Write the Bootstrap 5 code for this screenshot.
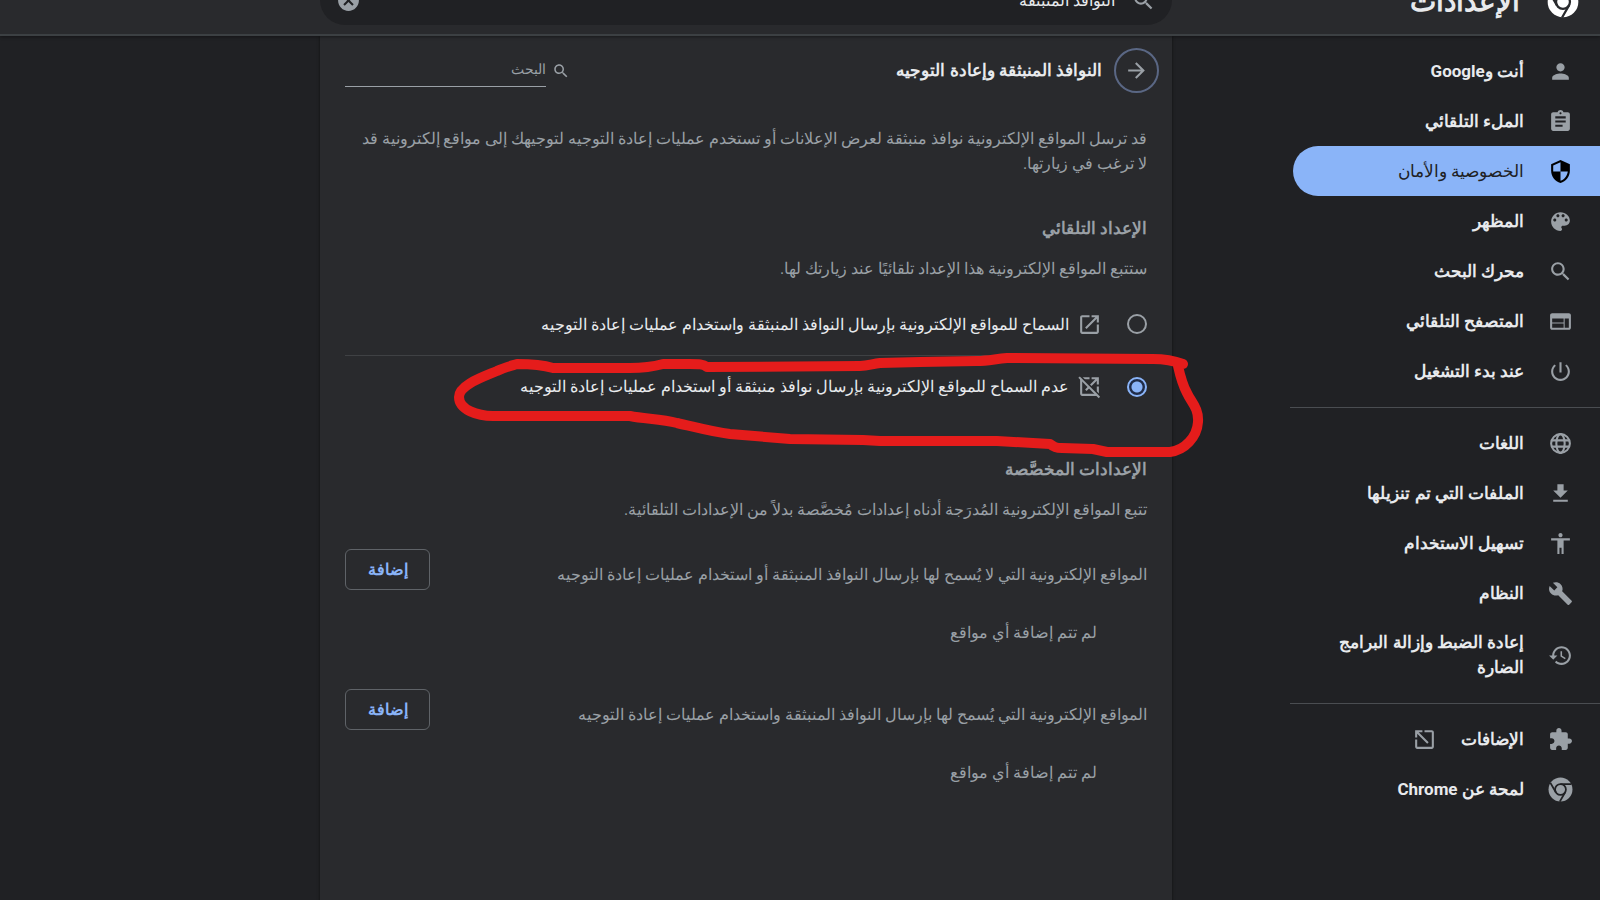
<!doctype html>
<html lang="ar" dir="rtl">
<head>
<meta charset="utf-8">
<meta name="viewport" content="width=device-width, initial-scale=1">
<title>الإعدادات</title>
<link href="https://cdn.jsdelivr.net/npm/bootstrap@5.3.0/dist/css/bootstrap.min.css" rel="stylesheet">
<style>
body{background:#202124;color:#e8eaed;font:16px/25px Roboto,"Segoe UI",sans-serif;height:100vh;overflow:hidden}
svg.ico{width:25px;height:25px;fill:#9aa0a6;flex:none;display:block}
/* The three columns shared by the toolbar and the page */
.cols{display:grid;grid-template-columns:minmax(310px,428fr) minmax(0,852px) minmax(0,320fr)}
.topbar{background:#292a2d;height:70px;margin-top:-34px;border-bottom:2px solid #3c4043;box-shadow:0 1px 3px #0006;position:relative;z-index:2;align-items:center}
.topbar h1{font-size:28px;font-weight:700;line-height:36px}
.brand{padding:4px 21px 0 0;gap:27px}
.brand svg{width:32px;height:32px;flex:none}
.pill{background:#202124;border-radius:25px;height:50px;padding:0 16px}
.pill input{color:#e8eaed;font-size:16px;outline:0}
.topbar button{line-height:0}
.side{width:310px;padding-top:10px}
.side a{color:#e8eaed;font-size:17px;font-weight:700;min-height:50px;padding:0 27px 0 24px;text-decoration:none}
.side a.on{background:#8ab4f8;color:#202124;font-weight:400;border-radius:25px 0 0 25px;margin-left:3px}
.side a.on svg{fill:#000}
.side a.tall{min-height:74px}
.side hr{margin:11px 0 10px;border-top:1px solid #4a4d51;opacity:1}
.panel{background:#292a2d;min-height:100vh;padding:0 25px;box-shadow:0 0 3px #0008}
.panel p{margin:0}
.head{height:69px}
.back{width:45px;height:45px;border:2px solid #5a6784;margin-right:-12px}
.head h2,.sub{font-size:17px;line-height:25px;font-weight:700;margin:0}
.find{gap:6px}
.find input{width:201px;height:32px;border:0;border-bottom:1px solid #9aa0a6;color:#e8eaed;font-size:14px;background:none;outline:0;padding:0 0 2px}
.find input::placeholder{color:#9aa0a6;opacity:1}
.find svg.ico{width:18px;height:18px}
.dim,.sub{color:#9aa0a6}
.panel .intro{padding:21px 0 0 10px}
.intro + .sub{margin-top:40px}
.panel .sub + .dim{margin-top:15px}
.opts{margin-top:12px}
.opt{height:62px}
.opt + .opt{border-top:1px solid #3f4144}
.opt input{appearance:none;width:20px;height:20px;border:2px solid #9aa0a6;border-radius:50%;margin:0}
.opt input:checked{border-color:#8ab4f8;background:radial-gradient(circle,#8ab4f8 5px,#202c48 6px)}
.opt svg.ico{margin:0 25px 0 8px}
.opts + .sub{margin-top:40px}
.sites{margin-top:27px}
.sites + .sites{margin-top:44px}
.panel .sites .lead-in{padding-top:13px}
.panel .sites .none{margin-top:30px;padding-right:50px}
.add{width:85px;height:41px;border:1px solid #5f6368;color:#8ab4f8;font-weight:700;line-height:25px;padding:0}
.mark-up{left:0;top:0;width:900px;height:500px;overflow:visible;pointer-events:none;z-index:1}
</style>
<script src="https://cdn.jsdelivr.net/npm/bootstrap@5.3.0/dist/js/bootstrap.bundle.min.js"></script>
</head>
<body>
<svg class="d-none">
<symbol id="search" viewBox="0 0 24 24"><path d="M15.500 14h-.79l-.28-.27C15.410 12.590 16 11.110 16 9.500 16 5.910 13.090 3 9.500 3S3 5.910 3 9.500 5.910 16 9.500 16c1.610 0 3.090-.59 4.230-1.570l.27.28v.79l5 4.990L20.490 19l-4.990-5zm-6 0C7.010 14 5 11.990 5 9.500S7.010 5 9.500 5 14 7.010 14 9.500 11.990 14 9.500 14z"/></symbol>
<symbol id="open" viewBox="0 0 24 24"><path d="M19 19H5V5h7V3H5c-1.110 0-2 .9-2 2v14c0 1.100.89 2 2 2h14c1.100 0 2-.9 2-2v-7h-2v7zM14 3v2h3.590l-9.830 9.830 1.410 1.410L19 6.410V10h2V3h-7z"/></symbol>
<symbol id="chrome" viewBox="0 0 24 24"><circle cx="12" cy="12" r="11.500"/><g fill="none" stroke="var(--cut)" stroke-width="1.700"><circle cx="12" cy="12" r="5.200"/><path d="M12 6.800H22.500M7.500 14.600 2.300 5.600M16.500 14.600 11.300 23.600"/></g></symbol>
</svg>

<header class="topbar cols">
  <div class="brand d-flex align-items-center">
    <svg fill="#fff" style="--cut:#292a2d"><use href="#chrome"/></svg>
    <h1 class="m-0">الإعدادات</h1>
  </div>
  <div class="pill d-flex align-items-center gap-3" role="search">
    <svg class="ico"><use href="#search"/></svg>
    <input class="flex-grow-1 bg-transparent border-0 p-0" type="text" value="النوافذ المنبثقة" aria-label="البحث في الإعدادات">
    <button class="btn p-0 border-0" aria-label="محو البحث"><svg class="ico" viewBox="0 0 24 24"><path d="M12 2C6.470 2 2 6.470 2 12s4.470 10 10 10 10-4.470 10-10S17.530 2 12 2zm5 13.590L15.590 17 12 13.410 8.410 17 7 15.590 10.590 12 7 8.410 8.410 7 12 10.590 15.590 7 17 8.410 13.410 12 17 15.590z"/></svg></button>
  </div>
</header>

<div class="cols">
<nav class="side" aria-label="أقسام الإعدادات">
  <a href="#" class="d-flex align-items-center gap-4"><svg class="ico" viewBox="0 0 24 24"><path d="M12 12c2.210 0 4-1.790 4-4s-1.790-4-4-4-4 1.790-4 4 1.790 4 4 4zm0 2c-2.670 0-8 1.340-8 4v2h16v-2c0-2.660-5.330-4-8-4z"/></svg><span>أنت وGoogle</span></a>
  <a href="#" class="d-flex align-items-center gap-4"><svg class="ico" viewBox="0 0 24 24"><path d="M19 3h-4.180C14.400 1.840 13.300 1 12 1c-1.300 0-2.400.84-2.820 2H5c-1.100 0-2 .9-2 2v14c0 1.100.9 2 2 2h14c1.100 0 2-.9 2-2V5c0-1.100-.9-2-2-2zm-7 0c.55 0 1 .45 1 1s-.45 1-1 1-1-.45-1-1 .45-1 1-1zm2 14H7v-2h7v2zm3-4H7v-2h10v2zm0-4H7V7h10v2z"/></svg><span>الملء التلقائي</span></a>
  <a href="#" class="on d-flex align-items-center gap-4" aria-current="page"><svg class="ico" viewBox="0 0 24 24"><path d="M12 1L3 5v6c0 5.550 3.840 10.740 9 12 5.160-1.260 9-6.450 9-12V5l-9-4zm0 10.990h7c-.53 4.120-3.280 7.790-7 8.940V12H5V6.300l7-3.110v8.800z"/></svg><span>الخصوصية والأمان</span></a>
  <a href="#" class="d-flex align-items-center gap-4"><svg class="ico" viewBox="0 0 24 24"><path d="M12 3c-4.970 0-9 4.030-9 9s4.030 9 9 9c.83 0 1.500-.67 1.500-1.500 0-.39-.15-.74-.39-1.010-.23-.26-.38-.61-.38-.99 0-.83.67-1.500 1.500-1.500H16c2.760 0 5-2.240 5-5 0-4.420-4.030-8-9-8zm-5.500 9c-.83 0-1.500-.67-1.500-1.500S5.670 9 6.500 9 8 9.670 8 10.500 7.330 12 6.500 12zm3-4C8.670 8 8 7.330 8 6.500S8.670 5 9.500 5s1.500.67 1.500 1.500S10.330 8 9.500 8zm5 0c-.83 0-1.500-.67-1.500-1.500S13.670 5 14.500 5s1.500.67 1.500 1.500S15.330 8 14.500 8zm3 4c-.83 0-1.500-.67-1.500-1.500S16.670 9 17.500 9s1.500.67 1.500 1.500-.67 1.500-1.500 1.500z"/></svg><span>المظهر</span></a>
  <a href="#" class="d-flex align-items-center gap-4"><svg class="ico"><use href="#search"/></svg><span>محرك البحث</span></a>
  <a href="#" class="d-flex align-items-center gap-4"><svg class="ico" viewBox="0 0 24 24"><path d="M20 4H4c-1.100 0-2 .9-2 2v12c0 1.100.9 2 2 2h16c1.100 0 2-.9 2-2V6c0-1.100-.9-2-2-2zm-5 14H4v-4h11v4zm0-5H4V9h11v4zm5 5h-4V9h4v9z"/></svg><span>المتصفح التلقائي</span></a>
  <a href="#" class="d-flex align-items-center gap-4"><svg class="ico" viewBox="0 0 24 24"><path d="M13 3h-2v10h2V3zm4.830 2.170l-1.420 1.420C17.990 7.860 19 9.810 19 12c0 3.870-3.130 7-7 7s-7-3.130-7-7c0-2.190 1.010-4.140 2.580-5.420L6.170 5.170C4.230 6.820 3 9.260 3 12c0 4.970 4.030 9 9 9s9-4.030 9-9c0-2.740-1.230-5.180-3.170-6.830z"/></svg><span>عند بدء التشغيل</span></a>
  <hr>
  <a href="#" class="d-flex align-items-center gap-4"><svg class="ico" viewBox="0 0 24 24"><g fill="none" stroke="#9aa0a6" stroke-width="2"><circle cx="12" cy="12" r="9"/><ellipse cx="12" cy="12" rx="4" ry="9"/><path d="M3.500 9h17M3.500 15h17"/></g></svg><span>اللغات</span></a>
  <a href="#" class="d-flex align-items-center gap-4"><svg class="ico" viewBox="0 0 24 24"><path d="M19 9h-4V3H9v6H5l7 7 7-7zM5 18v2h14v-2H5z"/></svg><span>الملفات التي تم تنزيلها</span></a>
  <a href="#" class="d-flex align-items-center gap-4"><svg class="ico" viewBox="0 0 24 24"><path d="M12 2c1.100 0 2 .9 2 2s-.9 2-2 2-2-.9-2-2 .9-2 2-2zm9 7h-6v13h-2v-6h-2v6H9V9H3V7h18v2z"/></svg><span>تسهيل الاستخدام</span></a>
  <a href="#" class="d-flex align-items-center gap-4"><svg class="ico" viewBox="0 0 24 24"><path d="M22.700 19l-9.100-9.100c.9-2.300.4-5-1.500-6.900-2-2-5-2.400-7.400-1.300L9 6 6 9 1.600 4.700C.4 7.100.9 10.100 2.900 12.100c1.900 1.900 4.600 2.400 6.900 1.500l9.100 9.100c.4.4 1 .4 1.400 0l2.300-2.300c.5-.4.5-1.100.1-1.400z"/></svg><span>النظام</span></a>
  <a href="#" class="tall d-flex align-items-center gap-4"><svg class="ico" viewBox="0 0 24 24"><path d="M13 3c-4.970 0-9 4.030-9 9H1l3.890 3.890.07.14L9 12H6c0-3.870 3.130-7 7-7s7 3.130 7 7-3.130 7-7 7c-1.930 0-3.680-.79-4.940-2.060l-1.420 1.420C8.270 19.990 10.510 21 13 21c4.970 0 9-4.030 9-9s-4.030-9-9-9zm-1 5v5l4.280 2.540.72-1.210-3.500-2.080V8H12z"/></svg><span>إعادة الضبط وإزالة البرامج الضارة</span></a>
  <hr>
  <a href="#" class="d-flex align-items-center gap-4"><svg class="ico" viewBox="0 0 24 24"><path d="M20.500 11H19V7c0-1.100-.9-2-2-2h-4V3.500C13 2.120 11.880 1 10.500 1S8 2.120 8 3.500V5H4c-1.100 0-1.990.9-1.990 2v3.800H3.500c1.490 0 2.700 1.210 2.700 2.700s-1.210 2.700-2.700 2.700H2V20c0 1.100.9 2 2 2h3.800v-1.500c0-1.490 1.210-2.700 2.700-2.700 1.490 0 2.700 1.210 2.700 2.700V22H17c1.100 0 2-.9 2-2v-4h1.500c1.380 0 2.500-1.120 2.500-2.500S21.880 11 20.500 11z"/></svg><span>الإضافات</span><svg class="ico" viewBox="0 0 24 24"><path d="M3 3h7v2H6.400L16 14.600 14.600 16 5 6.400V10H3zM12 3h7c1.100 0 2 .9 2 2v14c0 1.100-.9 2-2 2H5c-1.100 0-2-.9-2-2v-7h2v7h14V5h-7z"/></svg></a>
  <a href="#" class="d-flex align-items-center gap-4"><svg class="ico" style="--cut:#202124"><use href="#chrome"/></svg><span>لمحة عن Chrome</span></a>
</nav>

<main class="panel position-relative">
  <div class="head d-flex align-items-center justify-content-between">
    <div class="d-flex align-items-center gap-2">
      <button class="back btn rounded-circle p-0 d-flex align-items-center justify-content-center" aria-label="رجوع"><svg class="ico" viewBox="0 0 24 24"><path d="M12 4l-1.410 1.410L16.170 11H4v2h12.170l-5.580 5.590L12 20l8-8z"/></svg></button>
      <h2 class="pe-1">النوافذ المنبثقة وإعادة التوجيه</h2>
    </div>
    <label class="find d-flex align-items-center"><svg class="ico"><use href="#search"/></svg><input type="text" placeholder="البحث" aria-label="البحث"></label>
  </div>
  <p class="intro dim">قد ترسل المواقع الإلكترونية نوافذ منبثقة لعرض الإعلانات أو تستخدم عمليات إعادة التوجيه لتوجيهك إلى مواقع إلكترونية قد لا ترغب في زيارتها.</p>
  <h3 class="sub">الإعداد التلقائي</h3>
  <p class="dim">ستتبع المواقع الإلكترونية هذا الإعداد تلقائيًا عند زيارتك لها.</p>
  <div class="opts">
    <label class="opt d-flex align-items-center"><input type="radio" name="popups"><svg class="ico"><use href="#open"/></svg><span>السماح للمواقع الإلكترونية بإرسال النوافذ المنبثقة واستخدام عمليات إعادة التوجيه</span></label>
    <label class="opt d-flex align-items-center"><input type="radio" name="popups" checked><svg class="ico" viewBox="0 0 24 24"><path d="M19 19H5V5h7V3H5c-1.110 0-2 .9-2 2v14c0 1.100.89 2 2 2h14c1.100 0 2-.9 2-2v-7h-2v7zM14 3v2h3.590l-9.830 9.830 1.410 1.410L19 6.410V10h2V3h-7z"/><path d="M3 2 22.500 21.500" stroke="#292a2d" stroke-width="2"/><path d="M2 3 21.500 22.500" stroke="#9aa0a6" stroke-width="2"/></svg><span>عدم السماح للمواقع الإلكترونية بإرسال نوافذ منبثقة أو استخدام عمليات إعادة التوجيه</span></label>
  </div>
  <h3 class="sub">الإعدادات المخصَّصة</h3>
  <p class="dim">تتبع المواقع الإلكترونية المُدرَجة أدناه إعدادات مُخصَّصة بدلاً من الإعدادات التلقائية.</p>
  <section class="sites">
    <div class="d-flex justify-content-between"><p class="lead-in dim">المواقع الإلكترونية التي لا يُسمح لها بإرسال النوافذ المنبثقة أو استخدام عمليات إعادة التوجيه</p><button class="add btn">إضافة</button></div>
    <p class="none dim">لم تتم إضافة أي مواقع</p>
  </section>
  <section class="sites">
    <div class="d-flex justify-content-between"><p class="lead-in dim">المواقع الإلكترونية التي يُسمح لها بإرسال النوافذ المنبثقة واستخدام عمليات إعادة التوجيه</p><button class="add btn">إضافة</button></div>
    <p class="none dim">لم تتم إضافة أي مواقع</p>
  </section>
  <svg class="mark-up position-absolute" viewBox="320 36 900 500" fill="none" stroke="#e51c1b" stroke-width="10" stroke-linecap="round" stroke-linejoin="round" aria-hidden="true"><path d="M1183 364C1172 360 1162 359 1153 359L1007 358C995 359 988 361 977 361L920 362 880 363C872 364 868 366 860 366L707 367C703 364 699 364 690 364H663C652 367 642 368 630 368H553C543 365 530 364 517 364 507 367 503 368 497 371 483 377 459 385 459 397 459 410 478 416 493 416H630C645 419 661 419 677 423 695 427 712 432 730 434L790 439 863 440 880 441H997L1050 444C1054 447 1056 448 1062 448L1093 449 1107 452H1170C1185 450 1197 437 1198 422 1199 408 1191 402 1187 393 1182 384 1180 375 1178 366"/></svg>
</main>
</div>
</body>
</html>
